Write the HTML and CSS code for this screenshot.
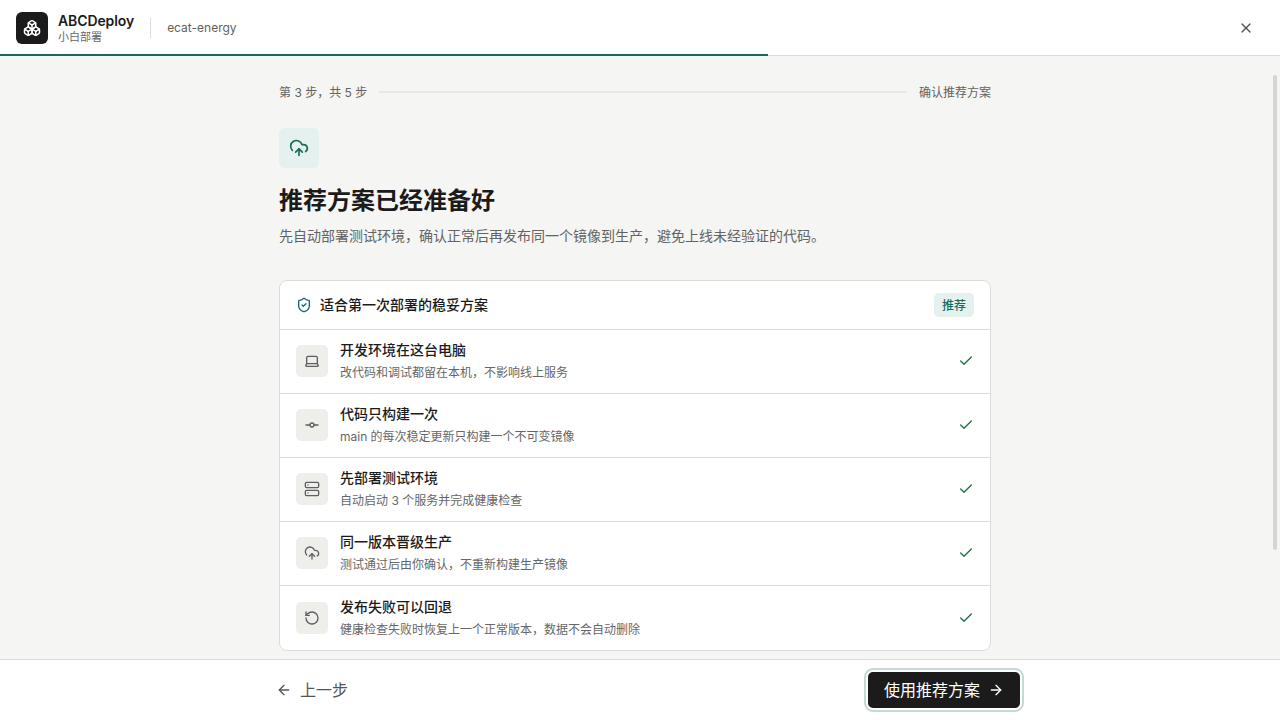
FILE: index.html
```html
<!DOCTYPE html>
<html lang="zh-CN">
<head>
  <meta charset="UTF-8" />
  <meta name="viewport" content="width=device-width, initial-scale=1.0" />
  <title>ABCDeploy</title>
  <link rel="stylesheet" href="styles.css">
</head>
<body>
  <svg class="symbols" aria-hidden="true">
    <symbol id="cloud-up" viewBox="0 0 24 24">
      <path d="M12 13v8" /><path d="M4 14.899A7 7 0 1 1 15.71 8h1.79a4.5 4.5 0 0 1 2.5 8.242" /><path d="m8 17 4-4 4 4" />
    </symbol>
    <symbol id="check" viewBox="0 0 24 24"><path d="M20 6 9 17l-5-5" /></symbol>
  </svg>

  <header class="topbar">
    <div class="logo">
      <svg class="icon" viewBox="0 0 24 24">
        <path d="M2.97 12.92A2 2 0 0 0 2 14.63v3.24a2 2 0 0 0 .97 1.71l3 1.8a2 2 0 0 0 2.06 0L12 19v-5.5l-5-3-4.03 2.42Z" />
        <path d="m7 16.5-4.74-2.85" /><path d="m7 16.5 5-3" /><path d="M7 16.5v5.17" />
        <path d="M12 13.5V19l3.97 2.38a2 2 0 0 0 2.06 0l3-1.8a2 2 0 0 0 .97-1.71v-3.24a2 2 0 0 0-.97-1.71L17 10.5l-5 3Z" />
        <path d="m17 16.5-5-3" /><path d="m17 16.5 4.74-2.85" /><path d="M17 16.5v5.17" />
        <path d="M7.97 4.42A2 2 0 0 0 7 6.13v4.37l5 3 5-3V6.13a2 2 0 0 0-.97-1.71l-3-1.8a2 2 0 0 0-2.06 0l-3 1.8Z" />
        <path d="M12 8 7.26 5.15" /><path d="m12 8 4.74-2.85" /><path d="M12 13.5V8" />
      </svg>
    </div>
    <div class="brand">
      <strong>ABCDeploy</strong>
      <span>小白部署</span>
    </div>
    <div class="project">ecat-energy</div>
    <button class="close" aria-label="关闭">
      <svg class="icon" viewBox="0 0 24 24"><path d="M18 6 6 18" /><path d="m6 6 12 12" /></svg>
    </button>
    <div class="progress"></div>
  </header>

  <main class="content">
    <div class="wizard">
      <div class="steps">
        <span>第 3 步，共 5 步</span>
        <i></i>
        <span>确认推荐方案</span>
      </div>
      <div class="hero-icon"><svg class="icon"><use href="#cloud-up" /></svg></div>
      <h1>推荐方案已经准备好</h1>
      <p class="lead">先自动部署测试环境，确认正常后再发布同一个镜像到生产，避免上线未经验证的代码。</p>

      <section class="card">
        <div class="card-head">
          <svg class="icon" viewBox="0 0 24 24">
            <path d="M20 13c0 5-3.5 7.5-7.66 8.95a1 1 0 0 1-.67-.01C7.5 20.5 4 18 4 13V6a1 1 0 0 1 1-1c2 0 4.5-1.2 6.24-2.72a1.17 1.17 0 0 1 1.52 0C14.51 3.81 17 5 19 5a1 1 0 0 1 1 1z" />
            <path d="m9 12 2 2 4-4" />
          </svg>
          <h2>适合第一次部署的稳妥方案</h2>
          <span class="badge">推荐</span>
        </div>
        <div class="row">
          <div class="row-icon">
            <svg class="icon" viewBox="0 0 24 24"><path d="M18 5a2 2 0 0 1 2 2v8.526a2 2 0 0 0 .212.897l1.068 2.127a1 1 0 0 1-.9 1.45H3.62a1 1 0 0 1-.9-1.45l1.068-2.127A2 2 0 0 0 4 15.526V7a2 2 0 0 1 2-2z" /><path d="M20.054 15.987H3.946" /></svg>
          </div>
          <div class="row-text">
            <h3>开发环境在这台电脑</h3>
            <p>改代码和调试都留在本机，不影响线上服务</p>
          </div>
          <svg class="icon ok"><use href="#check" /></svg>
        </div>
        <div class="row">
          <div class="row-icon">
            <svg class="icon" viewBox="0 0 24 24"><circle cx="12" cy="12" r="3" /><path d="M3 12h6" /><path d="M15 12h6" /></svg>
          </div>
          <div class="row-text">
            <h3>代码只构建一次</h3>
            <p>main 的每次稳定更新只构建一个不可变镜像</p>
          </div>
          <svg class="icon ok"><use href="#check" /></svg>
        </div>
        <div class="row">
          <div class="row-icon">
            <svg class="icon" viewBox="0 0 24 24"><rect width="20" height="8" x="2" y="2" rx="2" /><rect width="20" height="8" x="2" y="14" rx="2" /><path d="M6 6h.01" /><path d="M6 18h.01" /></svg>
          </div>
          <div class="row-text">
            <h3>先部署测试环境</h3>
            <p>自动启动 3 个服务并完成健康检查</p>
          </div>
          <svg class="icon ok"><use href="#check" /></svg>
        </div>
        <div class="row">
          <div class="row-icon"><svg class="icon"><use href="#cloud-up" /></svg></div>
          <div class="row-text">
            <h3>同一版本晋级生产</h3>
            <p>测试通过后由你确认，不重新构建生产镜像</p>
          </div>
          <svg class="icon ok"><use href="#check" /></svg>
        </div>
        <div class="row">
          <div class="row-icon">
            <svg class="icon" viewBox="0 0 24 24"><path d="M3 12a9 9 0 1 0 9-9 9.750 9.750 0 0 0-6.740 2.740L3 8" /><path d="M3 3v5h5" /></svg>
          </div>
          <div class="row-text">
            <h3>发布失败可以回退</h3>
            <p>健康检查失败时恢复上一个正常版本，数据不会自动删除</p>
          </div>
          <svg class="icon ok"><use href="#check" /></svg>
        </div>
      </section>
    </div>
    <div class="scroll-thumb"></div>
  </main>

  <footer class="footer">
    <div class="actions">
      <button class="back">
        <svg class="icon" viewBox="0 0 24 24"><path d="m12 19-7-7 7-7" /><path d="M19 12H5" /></svg>
        上一步
      </button>
      <button class="next">
        使用推荐方案
        <svg class="icon" viewBox="0 0 24 24"><path d="M5 12h14" /><path d="m12 5 7 7-7 7" /></svg>
      </button>
    </div>
  </footer>
</body>
</html>
```
FILE: styles.css
```css
* {
  box-sizing: border-box;
}
body {
  margin: 0;
  height: 100vh;
  display: flex;
  flex-direction: column;
  overflow: hidden;
  font-family: Inter, "Noto Sans CJK SC", sans-serif;
  font-size: 14px;
  color: #1b1b1b;
  background: #f5f5f3;
}
h1, h2, h3, p {
  margin: 0;
}
button {
  border: 0;
  background: none;
  font-family: inherit;
  cursor: pointer;
}
.symbols {
  position: absolute;
  width: 0;
  height: 0;
}
.icon {
  width: 16px;
  height: 16px;
  flex: none;
  fill: none;
  stroke: currentColor;
  stroke-width: 2;
  stroke-linecap: round;
  stroke-linejoin: round;
}

/* top bar */
.topbar {
  position: relative;
  flex: none;
  height: 56px;
  padding: 0 16px;
  display: flex;
  align-items: center;
  background: #fff;
  border-bottom: 1px solid #dcdcda;
}
.logo {
  width: 32px;
  height: 32px;
  display: grid;
  place-items: center;
  border-radius: 6px;
  background: #1b1b1b;
  color: #fff;
}
.logo .icon {
  width: 18px;
  height: 18px;
}
.brand {
  margin-left: 10px;
  padding-top: 2px;
  display: flex;
  flex-direction: column;
}
.brand strong {
  font-size: 14px;
  font-weight: 600;
  line-height: 18px;
  letter-spacing: -0.1px;
}
.brand span {
  font-size: 11px;
  line-height: 15px;
  color: #666;
}
.project {
  margin-left: 16px;
  padding-left: 16px;
  border-left: 1px solid #dcdcda;
  font-size: 12px;
  line-height: 20px;
  color: #5f5f5f;
}
.close {
  margin-left: auto;
  width: 36px;
  height: 36px;
  padding: 0;
  display: grid;
  place-items: center;
  color: #555;
}
.progress {
  position: absolute;
  left: 0;
  bottom: -1px;
  width: 60%;
  height: 2px;
  background: #176b5c;
}

/* content */
.content {
  position: relative;
  flex: 1;
  min-height: 0;
  padding-right: 10px;
  overflow: hidden;
}
.wizard {
  width: 712px;
  margin: 0 auto;
  padding-top: 28px;
}
.steps {
  display: flex;
  align-items: center;
  gap: 12px;
  font-size: 12px;
  line-height: 18px;
  color: #636363;
}
.steps i {
  flex: 1;
  height: 2px;
  margin-bottom: 2px;
  background: #e8e8e6;
}
.hero-icon {
  width: 40px;
  height: 40px;
  margin-top: 26px;
  display: grid;
  place-items: center;
  border-radius: 6px;
  background: #e4f1ee;
  color: #176b5c;
}
.hero-icon .icon {
  width: 20px;
  height: 20px;
}
h1 {
  margin-top: 17px;
  font-size: 24px;
  font-weight: 600;
  line-height: 32px;
}
.lead {
  margin-top: 7px;
  font-size: 14px;
  line-height: 24px;
  color: #636363;
}

/* plan card */
.card {
  margin-top: 32px;
  border: 1px solid #dcdcda;
  border-radius: 8px;
  background: #fff;
}
.card-head {
  height: 49px;
  padding: 0 16px;
  display: flex;
  align-items: center;
  border-bottom: 1px solid #dcdcda;
}
.card-head .icon {
  color: #176872;
}
h2 {
  flex: 1;
  margin-left: 8px;
  font-size: 14px;
  font-weight: 500;
  line-height: 20px;
}
.badge {
  padding: 1px 8px 0;
  border-radius: 5px;
  background: #e4f1ee;
  color: #176b5c;
  font-size: 12px;
  font-weight: 500;
  line-height: 23px;
}
.row {
  height: 64px;
  padding: 0 16px 1px;
  display: flex;
  align-items: center;
  gap: 12px;
  border-bottom: 1px solid #dcdcda;
}
.row:last-child {
  padding-bottom: 0;
  border-bottom: 0;
}
.row-icon {
  width: 32px;
  height: 32px;
  display: grid;
  place-items: center;
  border-radius: 5px;
  background: #eeeeeb;
  color: #5f5f5f;
}
.row-text {
  flex: 1;
}
h3 {
  font-size: 14px;
  font-weight: 500;
  line-height: 22px;
}
.row p {
  margin-top: 2px;
  font-size: 12px;
  line-height: 20px;
  color: #666;
}
.ok {
  color: #187548;
}
.scroll-thumb {
  position: absolute;
  top: 19px;
  right: 3px;
  width: 4px;
  height: 475px;
  border-radius: 2px;
  background: #d5d5d3;
}

/* footer */
.footer {
  flex: none;
  height: 61px;
  background: #fff;
  border-top: 1px solid #dcdcda;
}
.actions {
  width: 760px;
  height: 100%;
  margin: 0 auto;
  display: flex;
  align-items: center;
  justify-content: space-between;
}
.back, .next {
  height: 36px;
  padding: 0 16px;
  display: flex;
  align-items: center;
  gap: 8px;
  font-size: 16px;
  line-height: 24px;
}
.back {
  color: #555;
}
.next {
  border-radius: 5px;
  background: #1b1b1b;
  color: #fff;
  box-shadow: 0 0 0 2px #fff, 0 0 0 4px #c3d9d5;
}
```
